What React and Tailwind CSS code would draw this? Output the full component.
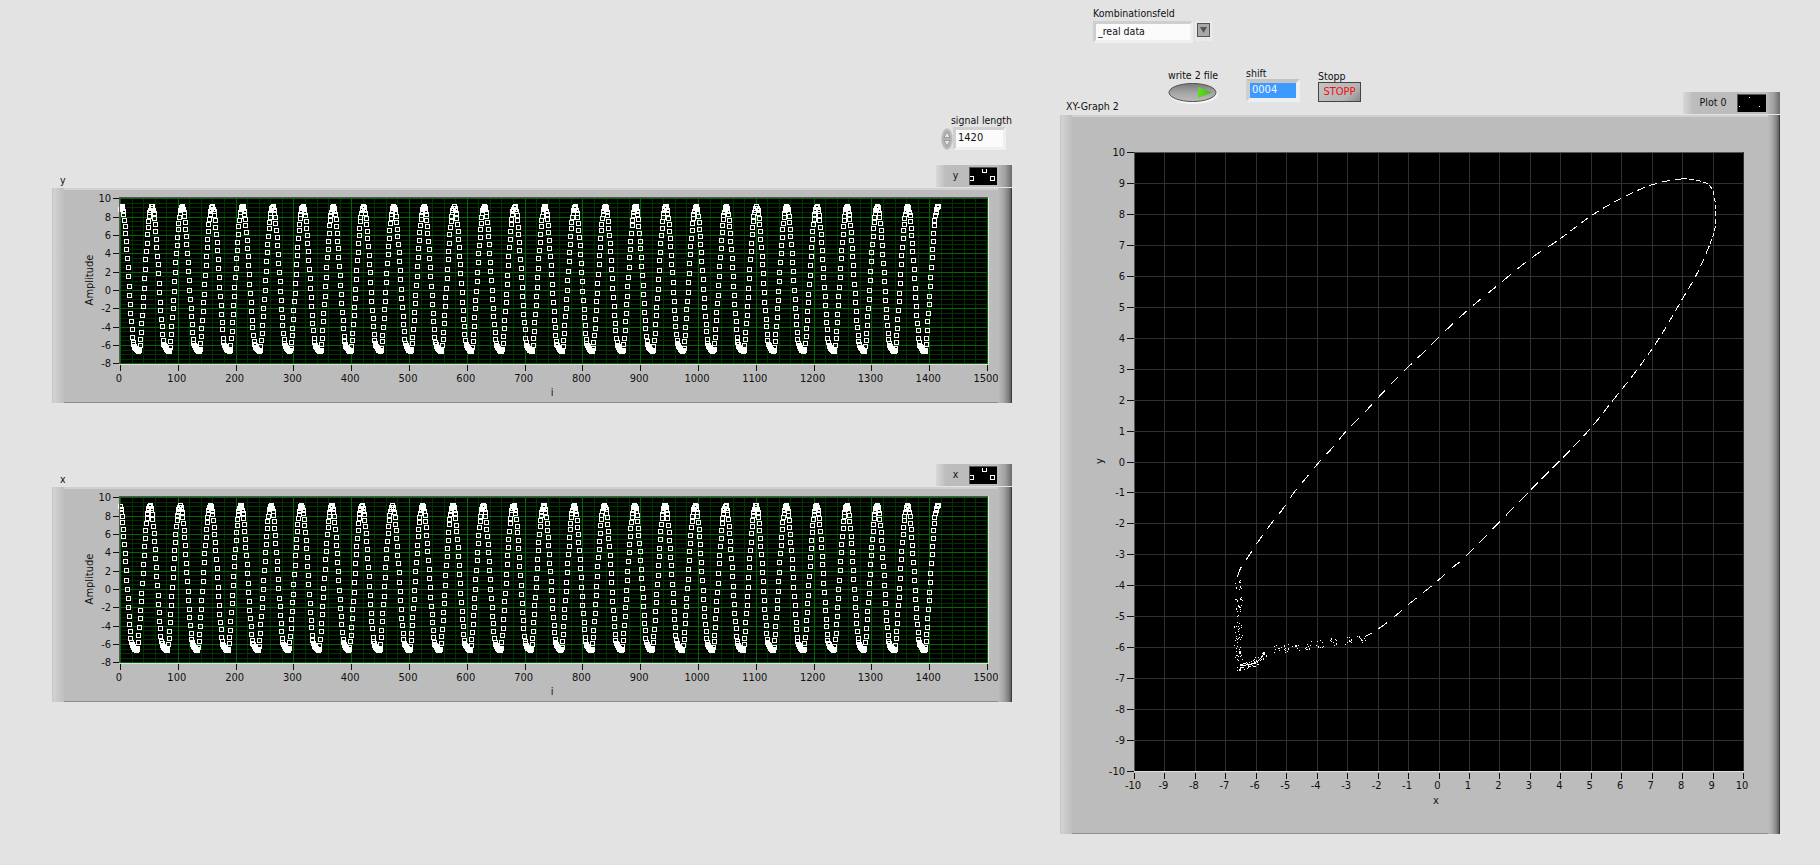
import React from "react";

const FONT = "font-['DejaVu_Sans_Condensed','Liberation_Sans',sans-serif] text-[10.5px] text-[#111]";

const V = [9.1,9.15,8.9,8.6,8.25,7.64,6.9,6.15,5.27,4.4,3.4,2.44,1.45,0.36,-0.65,-1.64,-2.6,-3.5,-4.3,-5.2,-5.7,-5.95,-6.1,-6.2,-6.3,-6.4,-6.5,-6.55,-6.6,-6.6,-6.6,-6.55,-5.9,-5.2,-4.4,-3.4,-2.5,-1.5,-0.6,0.5,1.5,2.6,3.6,4.5,5.4,6.3,7.1,7.7,8.2,8.55,8.85,9.05,9.15];

const wx = (i) => 120 + 0.578 * i;
const wy = (v) => 198.3 + (10 - v) * 9.17;

function wavePath(period, start) {
  let d = "";
  for (let i = 0; i <= 1415; i++) {
    let p = (((i + start) % period) + period) % period;
    p = (p / period) * 52;
    const a = Math.floor(p);
    const v = V[a] + (V[Math.min(a + 1, 52)] - V[a]) * (p - a);
    const x = Math.round(wx(i)) - 2;
    const y = Math.round(wy(v)) - 2;
    d += `M${x + 0.5} ${y + 0.5}h4v4h-4z`;
  }
  return d;
}

function WavePlot({ period, start }) {
  const minorV = [];
  const majorV = [];
  for (let k = 0; k <= 75; k++) {
    const x = Math.round(wx(k * 20)) + 0.5;
    if (k % 5 === 0) majorV.push(x);
    else minorV.push(x);
  }
  const minorH = [];
  const majorH = [];
  for (let k = 0; k <= 36; k++) {
    const y = Math.round(wy(10 - k * 0.5)) + 0.5;
    if (k % 4 === 0) majorH.push(y);
    else minorH.push(y);
  }
  const yTicks = [10, 8, 6, 4, 2, 0, -2, -4, -6, -8];
  const xTicks = Array.from({ length: 16 }, (_, k) => k * 100);
  return (
    <svg viewBox="64 190 934 211" width="934" height="211" className="block shrink-0" shapeRendering="crispEdges">
      <rect x="119" y="197" width="869" height="167" fill="#000" />
      <g stroke="#003300" strokeWidth="1">
        {minorV.map((x) => <line key={x} x1={x} x2={x} y1="197" y2="364" />)}
        {minorH.map((y) => <line key={y} x1="119" x2="988" y1={y} y2={y} />)}
      </g>
      <g stroke="#006800" strokeWidth="1">
        {majorV.map((x) => <line key={x} x1={x} x2={x} y1="197" y2="364" />)}
        {majorH.map((y) => <line key={y} x1="119" x2="988" y1={y} y2={y} />)}
      </g>
      <path d={wavePath(period, start)} fill="none" stroke="#fff" strokeWidth="1" />
      <path d="M119.5 364V197.5H988" fill="none" stroke="#555" />
      <path d="M119 364.5H988.5V197" fill="none" stroke="#e0e0e0" />
      <g stroke="#111">
        {yTicks.map((v) => <line key={v} x1="113" x2="119" y1={Math.round(wy(v)) + 0.5} y2={Math.round(wy(v)) + 0.5} />)}
        {xTicks.map((v) => <line key={v} x1={Math.round(wx(v)) + 0.5} x2={Math.round(wx(v)) + 0.5} y1="365" y2="371" />)}
      </g>
      <g fill="#111" fontSize="11">
        {yTicks.map((v) => <text key={v} x="111" y={wy(v) + 4} textAnchor="end">{v}</text>)}
        {xTicks.map((v) => <text key={v} x={wx(v) - 1} y="382" textAnchor="middle">{v}</text>)}
        <text x="93" y="280" textAnchor="middle" transform="rotate(-90 93 280)">Amplitude</text>
        <text x="552" y="396" textAnchor="middle">i</text>
      </g>
    </svg>
  );
}

const vx = (v) => 1134 + (v + 10) * 30.45;
const vy = (v) => 152 + (10 - v) * 30.95;

const CURVE = [[-6.6,-3.73],[-6.5,-3.45],[-6.25,-3.08],[-5.93,-2.6],[-5.53,-2.05],[-5.14,-1.57],[-4.78,-1.05],[-4.38,-0.57],[-3.92,-0.02],[-3.46,0.47],[-3,1.02],[-2.51,1.5],[-2.02,2.02],[-1.53,2.54],[-1.03,3.02],[-0.51,3.51],[-0.02,3.99],[0.97,4.9],[1.99,5.73],[3,6.54],[4,7.2],[5,7.93],[5.96,8.48],[6.98,8.93],[8,9.13],[8.7,9.03],[9,8.77],[9.1,8.2],[9.08,7.54],[8.88,6.94],[8.5,6.09],[7.93,5.12],[7.27,4.02],[6.52,2.96],[5.73,1.98],[4.8,0.86],[2.9,-1.05],[0.97,-2.99],[0.48,-3.41],[-0.19,-3.99],[-1,-4.63],[-1.5,-5.06],[-2.02,-5.44],[-2.4,-5.65]];

const SEGMENTS = [
  [0, 20, "11 8"],
  [20, 24, "8 5"],
  [24, 29, "5 2"],
  [29, 33, "8 5"],
  [33, 36, "10 5"],
  [36, 43, "11 8"],
];

function curvePath(from, to) {
  const p = CURVE.map(([a, b]) => [vx(a), vy(b)]);
  let d = `M${p[from][0]} ${p[from][1]}`;
  for (let i = from; i < to; i++) {
    const p0 = p[Math.max(i - 1, 0)];
    const p1 = p[i];
    const p2 = p[i + 1];
    const p3 = p[Math.min(i + 2, p.length - 1)];
    d += `C${p1[0] + (p2[0] - p0[0]) / 6} ${p1[1] + (p2[1] - p0[1]) / 6} ${p2[0] - (p3[0] - p1[0]) / 6} ${p2[1] - (p3[1] - p1[1]) / 6} ${p2[0]} ${p2[1]}`;
  }
  return d;
}

function dotsPath() {
  let seed = 12345;
  const rnd = () => {
    seed = (seed * 1103515245 + 12345) & 0x7fffffff;
    return seed / 0x7fffffff;
  };
  let d = "";
  const dot = (x, y) => {
    d += `M${Math.round(x)} ${Math.round(y)}h1v1h-1z`;
  };
  [-3.95, -4.5, -4.85, -5.3, -5.6, -6, -6.3].forEach((v) => {
    for (let k = 0; k < 11; k++) dot(vx(-6.58) + (rnd() - 0.5) * 8, vy(v) + (rnd() - 0.5) * 11);
  });
  [-5.3, -5, -4.7, -4.3, -3.9, -3.45, -2.95, -2.55].forEach((u) => {
    const v = -6.05 + ((u + 5.3) / 2.75) * 0.33;
    for (let k = 0; k < 10; k++) dot(vx(u) + (rnd() - 0.5) * 8, vy(v) + (rnd() - 0.5) * 8);
  });
  for (let k = 0; k < 70; k++) {
    const t = rnd();
    dot(vx(-6.6 + t * 0.9) + (rnd() - 0.5) * 6, vy(-6.65 + t * t * 0.45) + (rnd() - 0.5) * 7);
  }
  return d;
}

function XYPlot() {
  const ticks = Array.from({ length: 21 }, (_, k) => k - 10);
  return (
    <svg viewBox="1072 117 696 715" width="696" height="715" className="block shrink-0" shapeRendering="crispEdges">
      <rect x="1134" y="152" width="609" height="619" fill="#000" />
      <g stroke="#303030">
        {ticks.map((v) => <line key={v} x1={Math.round(vx(v)) + 0.5} x2={Math.round(vx(v)) + 0.5} y1="152" y2="771" />)}
        {ticks.map((v) => <line key={v} x1="1134" x2="1743" y1={Math.round(vy(v)) + 0.5} y2={Math.round(vy(v)) + 0.5} />)}
      </g>
      {SEGMENTS.map(([a, b, dash]) => (
        <path key={a} d={curvePath(a, b)} fill="none" stroke="#fff" strokeDasharray={dash} />
      ))}
      <path d="M1240 666L1246 665L1252 664L1258 661L1262 657L1265 652" fill="none" stroke="#fff" />
      <path d={dotsPath()} fill="#fff" />
      <path d="M1134.5 771V152.5H1743" fill="none" stroke="#555" />
      <path d="M1134 771.5H1743.5" fill="none" stroke="#e0e0e0" />
      <g stroke="#111">
        {ticks.map((v) => <line key={v} x1="1127" x2="1134" y1={Math.round(vy(v)) + 0.5} y2={Math.round(vy(v)) + 0.5} />)}
        {ticks.map((v) => <line key={v} x1={Math.round(vx(v)) + 0.5} x2={Math.round(vx(v)) + 0.5} y1="773" y2="779" />)}
      </g>
      <g fill="#111" fontSize="11">
        {ticks.map((v) => <text key={v} x="1125" y={vy(v) + 4} textAnchor="end">{v}</text>)}
        {ticks.map((v) => <text key={v} x={vx(v) - 1} y="789" textAnchor="middle">{v}</text>)}
        <text x="1103" y="461" textAnchor="middle" transform="rotate(-90 1103 461)">y</text>
        <text x="1436" y="804" textAnchor="middle">x</text>
      </g>
    </svg>
  );
}

function Panel({ w, h, rightBand, children }) {
  return (
    <div className={`flex ${w} ${h} bg-[#bcbcbc]`}>
      <div className="w-[12px] shrink-0 bg-[linear-gradient(90deg,#c4c4c4_0,#d2d2d2_2px,#c9c9c9_6px,#bfbfbf_12px)]" />
      <div className="flex flex-1 flex-col overflow-hidden">
        <div className="h-[2px] shrink-0 bg-[#d0d0d0]" />
        {children}
        <div className="mt-auto h-[2px] shrink-0 border-b border-[#8c8c8c] bg-[#bcbcbc]" />
      </div>
      <div className={`${rightBand} shrink-0 border-r border-[#3c3c3c] bg-[linear-gradient(90deg,#bcbcbc_0,#a8a8a8_40%,#808080_80%,#5c5c5c_100%)]`} />
    </div>
  );
}

function Legend({ label, swatchDots, w, labelW, swatchW, rightBand }) {
  return (
    <div className={`flex ${w} h-[22px] items-stretch bg-[#bcbcbc]`}>
      <div className="w-[10px] shrink-0 bg-[linear-gradient(90deg,#d8d8d8_0,#c8c8c8_60%,#bcbcbc_100%)]" />
      <div className={`flex ${labelW} items-center justify-center pr-[4px]`}>{label}</div>
      <div className="flex items-center">
        <svg width={swatchW} height="18" className="block" shapeRendering="crispEdges">
          <rect width={swatchW} height="18" fill="#000" />
          <path d={`M0.5 18V0.5H${swatchW}`} fill="none" stroke="#555" />
          {swatchDots}
        </svg>
      </div>
      <div className={`ml-auto ${rightBand} bg-[linear-gradient(90deg,#bcbcbc_0,#a0a0a0_55%,#6a6a6a_100%)]`} />
    </div>
  );
}

const MARKERS = (
  <g fill="none" stroke="#fff">
    <path d="M13.5 2v3.5h4V2" />
    <path d="M1 9.5h3.5v4H1" />
    <rect x="21.5" y="9.5" width="4" height="4" />
  </g>
);

function WaveGraph({ label, period, start, mt }) {
  return (
    <div className={mt}>
      <div className="flex h-[23px] w-[960px] items-end justify-between">
        <span className="pb-[1px] pl-[8px] leading-[14px]">{label}</span>
        <div className="self-start">
          <Legend label={label} swatchDots={MARKERS} w="w-[76px]" labelW="w-[23px]" swatchW={28} rightBand="w-[15px]" />
        </div>
      </div>
      <Panel w="w-[960px]" h="h-[215px]" rightBand="w-[14px]">
        <WavePlot period={period} start={start} />
      </Panel>
    </div>
  );
}

export default function App() {
  return (
    <div className={`flex h-[865px] w-[1820px] overflow-hidden bg-[#e3e3e3] ${FONT}`}>
      <div className="w-[1060px] shrink-0 pl-[52px] pt-[113px]">
        <div className="flex w-[960px] flex-col items-end">
          <span className="h-[14px] leading-[14px]">signal length</span>
          <div className="flex h-[23px] w-[71px] items-center self-end pr-[6px]">
            <svg width="12" height="22" viewBox="0 0 12 22" className="block shrink-0">
              <ellipse cx="6" cy="11" rx="5.5" ry="10.5" fill="#b4b4b4" stroke="#cfcfcf" />
              <path d="M6 4L9 9.5H3Z" fill="#e8e8e8" stroke="#7a7a7a" strokeWidth="0.6" />
              <path d="M6 18L9 12.5H3Z" fill="#e8e8e8" stroke="#7a7a7a" strokeWidth="0.6" />
            </svg>
            <div className="flex h-[23px] flex-1 items-center border-[3px] border-t-[#d0d0d0] border-l-[#cfcfcf] border-r-[#f0f0f0] border-b-[#f0f0f0] bg-[#fbfbfb] pl-[2px] text-[11px]">1420</div>
          </div>
        </div>
        <WaveGraph label="y" period={52.3} start={-2} mt="mt-[15px]" />
        <WaveGraph label="x" period={52.42} start={1.5} mt="mt-[61px]" />
      </div>

      <div className="w-[720px] shrink-0 pt-[6px]">
        <div className="ml-[33px]">
          <div className="h-[15px] leading-[14px]">Kombinationsfeld</div>
          <div className="flex items-start">
            <div className="flex h-[22px] w-[100px] items-center border-[3px] border-t-[#cfcfcf] border-l-[#cfcfcf] border-r-[#efefef] border-b-[#efefef] bg-[#fbfbfb] pl-[2px]">_real data</div>
            <div className="ml-[2px] flex h-[20px] w-[17px] items-start border-2 border-[#eaeaea] bg-[#eaeaea]">
              <div className="flex h-[14px] w-[13px] items-center justify-center border border-[#555] bg-[#a9a9a9]">
                <svg width="7" height="6" viewBox="0 0 7 6" className="block"><path d="M0 0H7L3.5 6Z" fill="#555" /></svg>
              </div>
            </div>
          </div>
        </div>
        <div className="mt-[23px] flex h-[49px] items-stretch">
          <span className="w-[108px] shrink-0 self-end pb-[2px] pl-[6px] leading-[14px]">XY-Graph 2</span>
          <div className="mt-[2px] flex w-[50px] shrink-0 flex-col items-center">
            <span className="h-[14px] leading-[14px] whitespace-nowrap">write 2 file</span>
            <svg width="50" height="22" viewBox="0 0 50 22" className="block">
              <defs>
                <linearGradient id="ledBody" x1="0" y1="0" x2="0" y2="1">
                  <stop offset="0" stopColor="#7a7a7a" />
                  <stop offset="0.5" stopColor="#a4a4a4" />
                  <stop offset="1" stopColor="#bcbcbc" />
                </linearGradient>
                <linearGradient id="ledGreen" x1="0" y1="0" x2="1" y2="0">
                  <stop offset="0" stopColor="#60e020" />
                  <stop offset="1" stopColor="#48b028" />
                </linearGradient>
              </defs>
              <ellipse cx="25.5" cy="12" rx="24.5" ry="10" fill="#f6f6f6" />
              <ellipse cx="24.5" cy="10.5" rx="23.5" ry="9" fill="url(#ledBody)" stroke="#505050" />
              <path d="M30 5L44 10.5L30 16Z" fill="url(#ledGreen)" />
            </svg>
          </div>
          <div className="ml-[28px] flex w-[54px] shrink-0 flex-col">
            <span className="h-[13px] leading-[14px]">shift</span>
            <div className="flex h-[23px] items-center border-[4px] border-t-[#c4c4c4] border-l-[#cfcfcf] border-r-[#efefef] border-b-[#efefef] bg-[#3d9bff] pl-[2px] text-[11px] text-[#f4f8ff]">0004</div>
          </div>
          <div className="ml-[18px] mt-[3px] flex w-[43px] shrink-0 flex-col">
            <span className="h-[13px] leading-[14px]">Stopp</span>
            <div className="flex h-[20px] items-center justify-center border border-[#444] bg-[linear-gradient(135deg,#c4c4c4,#b4b4b4_70%,#8a8a8a)] text-[11px] text-[#f01010]">STOPP</div>
          </div>
          <div className="ml-auto mt-[26px]">
            <Legend
              label="Plot 0"
              w="w-[97px]"
              labelW="w-[44px]"
              swatchW={29}
              rightBand="w-[14px]"
              swatchDots={<g fill="#fff"><rect x="12" y="3" width="1" height="1" /><rect x="2" y="12" width="1" height="1" /><rect x="22" y="12" width="1" height="1" /></g>}
            />
          </div>
        </div>
        <Panel w="w-[720px]" h="h-[719px]" rightBand="w-[12px]">
          <XYPlot />
        </Panel>
      </div>
    </div>
  );
}
